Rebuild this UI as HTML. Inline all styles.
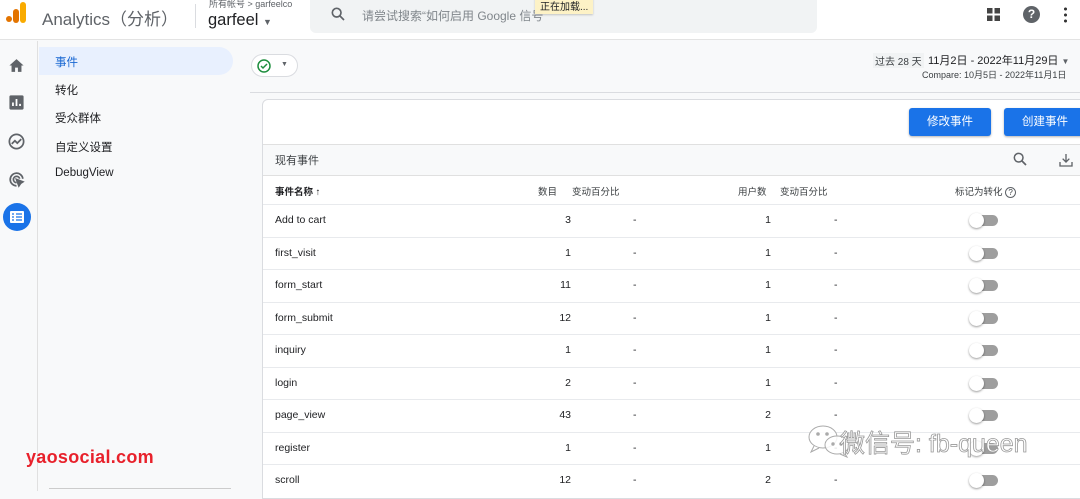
<!DOCTYPE html>
<html><head><meta charset="utf-8"><style>
*{box-sizing:border-box;margin:0;padding:0}
body{width:1080px;height:491px;overflow:hidden;background:#f8f9fa;font-family:"Liberation Sans","Noto Sans CJK SC",sans-serif;color:#202124;position:relative}
.abs{position:absolute}
.top{left:0;top:0;width:1080px;height:40px;background:#fff;border-bottom:1px solid #e3e3e3}
.rail{left:0;top:41px;width:38px;height:450px;background:#f8f9fa;border-right:1px solid #e0e0e0}
.nav{left:39px;top:41px;width:210px;height:450px;background:#f8f9fa}
.nav div{position:absolute;left:16px;font-size:11.5px;color:#202124}
.card{left:262px;top:99px;width:830px;height:400px;background:#fff;border:1px solid #dadce0;border-radius:6px 0 0 0}
.btn{top:108px;height:28px;background:#1a73e8;color:#fff;font-size:11.5px;text-align:center;line-height:28px;border-radius:3px;box-shadow:0 1px 2px rgba(0,0,0,.3)}
.row{position:absolute;left:263px;width:820px;height:32.5px;border-top:1px solid #e8eaed;font-size:10.5px}
.row span{position:absolute;top:9px}
.tg{position:absolute;top:10px;left:711px;width:24px;height:11px;background:#9e9e9e;border-radius:6px}
.tg::before{content:"";position:absolute;left:-5px;top:-2px;width:15px;height:15px;border-radius:50%;background:#fff;box-shadow:0 1px 2px rgba(0,0,0,.4)}
</style></head><body>
<div class="abs top"></div>
<div class="abs" style="left:6px;top:16px;width:6px;height:6px;border-radius:50%;background:#e37400"></div>
<div class="abs" style="left:13px;top:9px;width:6px;height:14px;border-radius:3px;background:#e37400"></div>
<div class="abs" style="left:20px;top:2px;width:6px;height:21px;border-radius:3px;background:#f9ab00"></div>
<div class="abs" style="left:42px;top:5px;font-size:17px;color:#5f6368">Analytics（分析）</div>
<div class="abs" style="left:195px;top:4px;width:1px;height:24px;background:#dadce0"></div>
<div class="abs" style="left:209px;top:-3px;font-size:9px;color:#5f6368">所有帐号 &gt; garfeelco</div>
<div class="abs" style="left:208px;top:11px;font-size:16.5px;color:#202124">garfeel <span style="font-size:9px;color:#5f6368">▼</span></div>
<div class="abs" style="left:310px;top:0;width:507px;height:33px;background:#f1f3f4;border-radius:0 0 6px 6px"></div>
<svg class="abs" style="left:330px;top:6px" width="16" height="16" viewBox="0 0 24 24"><circle cx="10" cy="10" r="6.5" fill="none" stroke="#5f6368" stroke-width="2.5"/><path d="M15 15l6 6" stroke="#5f6368" stroke-width="2.5"/></svg>
<div class="abs" style="left:362px;top:7px;font-size:12px;color:#80868b">请尝试搜索“如何启用 Google 信号</div>
<div class="abs" style="left:535px;top:-3px;padding:1px 5px;background:#fdf2c6;font-size:10px;color:#202124;box-shadow:0 1px 2px rgba(0,0,0,.2)">正在加载...</div>
<svg class="abs" style="left:986px;top:7px" width="15" height="15" viewBox="0 0 15 15" fill="#444"><rect x="1" y="1" width="5.5" height="5.5"/><rect x="8.5" y="1" width="5.5" height="5.5"/><rect x="1" y="8.5" width="5.5" height="5.5"/><rect x="8.5" y="8.5" width="5.5" height="5.5"/></svg>
<div class="abs" style="left:1023px;top:6px;width:17px;height:17px;border-radius:50%;background:#5f6368;color:#fff;font-size:12px;font-weight:bold;text-align:center;line-height:17px">?</div>
<div class="abs" style="left:1064px;top:6px;width:3px;height:17px;background:radial-gradient(circle,#333 1.4px,transparent 1.6px) 0 0/3px 6px"></div>

<div class="abs rail"></div>
<svg class="abs" style="left:8px;top:57px" width="17" height="17" viewBox="0 0 24 24" fill="#5f6368"><path d="M12 3L2 12h3v9h5v-6h4v6h5v-9h3z"/></svg>
<svg class="abs" style="left:8px;top:94px" width="17" height="17" viewBox="0 0 24 24"><rect x="2" y="2" width="20" height="20" rx="2" fill="#5f6368"/><path d="M7 17v-5M12 17V7M17 17v-3" stroke="#fff" stroke-width="2.5"/></svg>
<svg class="abs" style="left:7px;top:132px" width="19" height="19" viewBox="0 0 24 24" fill="none" stroke="#5f6368" stroke-width="2.2"><circle cx="12" cy="12" r="9"/><path d="M6 15l4-4 3 3 5-5"/></svg>
<svg class="abs" style="left:7px;top:170px" width="19" height="19" viewBox="0 0 24 24" fill="none" stroke="#5f6368" stroke-width="2.2"><path d="M20 11a8 8 0 1 0-8 9"/><path d="M16 11a4 4 0 1 0-4 5"/><path d="M12 12l8 3-3 2-2 3z" fill="#5f6368"/></svg>
<div class="abs" style="left:3px;top:203px;width:28px;height:28px;border-radius:50%;background:#1a73e8"></div>
<svg class="abs" style="left:10px;top:210px" width="14" height="14" viewBox="0 0 14 14" fill="#fff"><rect x="0" y="1" width="14" height="12" rx="1"/><path d="M2 4h2M6 4h6M2 7h2M6 7h6M2 10h2M6 10h6" stroke="#1a73e8" stroke-width="1.3"/></svg>

<div class="abs nav">
<div style="left:0;top:6px;width:194px;height:28px;background:#e8f0fe;border-radius:0 14px 14px 0"></div>
<div style="top:13px;color:#1967d2">事件</div>
<div style="top:41px">转化</div>
<div style="top:69px">受众群体</div>
<div style="top:98px">自定义设置</div>
<div style="top:126px">DebugView</div>
</div>
<div class="abs" style="left:49px;top:488px;width:182px;height:1px;background:#ccc"></div>
<div class="abs" style="left:26px;top:447px;font-size:18px;font-weight:bold;color:#e8212b;letter-spacing:0.3px">yaosocial.com</div>

<div class="abs" style="left:251px;top:54px;width:47px;height:23px;border:1px solid #dadce0;border-radius:12px;background:#fff"></div>
<svg class="abs" style="left:257px;top:59px" width="14" height="14" viewBox="0 0 14 14" fill="none" stroke="#1e8e3e" stroke-width="1.5"><circle cx="7" cy="7" r="6"/><path d="M4 7l2 2 4-4"/></svg>
<div class="abs" style="left:281px;top:61px;font-size:7px;color:#5f6368">▼</div>
<div class="abs" style="left:250px;top:92px;width:830px;height:1px;background:#dadce0"></div>

<div class="abs" style="left:873px;top:53px;font-size:10px;color:#3c4043;background:#f1f3f4;padding:0 2px">过去 28 天</div>
<div class="abs" style="left:928px;top:52px;font-size:11px;color:#202124">11月2日 - 2022年11月29日 <span style="font-size:8px;color:#5f6368">▼</span></div>
<div class="abs" style="left:922px;top:68px;font-size:9px;color:#3c4043">Compare: 10月5日 - 2022年11月1日</div>

<div class="abs card"></div>
<div class="abs btn" style="left:909px;width:82px">修改事件</div>
<div class="abs btn" style="left:1004px;width:82px">创建事件</div>
<div class="abs" style="left:263px;top:144px;width:820px;height:32px;background:#f8f9fa;border-top:1px solid #e0e0e0;border-bottom:1px solid #e0e0e0"></div>
<div class="abs" style="left:275px;top:152px;font-size:11px;color:#3c4043">现有事件</div>
<svg class="abs" style="left:1012px;top:151px" width="16" height="16" viewBox="0 0 24 24"><circle cx="10" cy="10" r="6.5" fill="none" stroke="#5f6368" stroke-width="2.3"/><path d="M15 15l6 6" stroke="#5f6368" stroke-width="2.5"/></svg>
<svg class="abs" style="left:1058px;top:152px" width="16" height="16" viewBox="0 0 24 24" fill="none" stroke="#5f6368" stroke-width="2"><path d="M12 3v12M7 10l5 5 5-5M3 15v6h18v-6"/></svg>

<div class="abs" style="left:275px;top:184px;font-size:9.5px;font-weight:bold">事件名称 ↑</div>
<div class="abs" style="left:538px;top:184px;font-size:9.5px;color:#3c4043">数目</div>
<div class="abs" style="left:572px;top:184px;font-size:9.5px;color:#3c4043">变动百分比</div>
<div class="abs" style="left:738px;top:184px;font-size:9.5px;color:#3c4043">用户数</div>
<div class="abs" style="left:780px;top:184px;font-size:9.5px;color:#3c4043">变动百分比</div>
<div class="abs" style="left:955px;top:184px;font-size:9.5px;color:#3c4043">标记为转化 <span style="display:inline-block;width:11px;height:11px;border:1px solid #5f6368;border-radius:50%;font-size:8px;text-align:center;line-height:9px">?</span></div>

<div class="row" style="top:204px"><span style="left:12px">Add to cart</span><span style="right:512px">3</span><span style="left:370px">-</span><span style="right:312px">1</span><span style="left:571px">-</span><i class="tg"></i></div>
<div class="row" style="top:236.5px"><span style="left:12px">first_visit</span><span style="right:512px">1</span><span style="left:370px">-</span><span style="right:312px">1</span><span style="left:571px">-</span><i class="tg"></i></div>
<div class="row" style="top:269px"><span style="left:12px">form_start</span><span style="right:512px">11</span><span style="left:370px">-</span><span style="right:312px">1</span><span style="left:571px">-</span><i class="tg"></i></div>
<div class="row" style="top:301.5px"><span style="left:12px">form_submit</span><span style="right:512px">12</span><span style="left:370px">-</span><span style="right:312px">1</span><span style="left:571px">-</span><i class="tg"></i></div>
<div class="row" style="top:334px"><span style="left:12px">inquiry</span><span style="right:512px">1</span><span style="left:370px">-</span><span style="right:312px">1</span><span style="left:571px">-</span><i class="tg"></i></div>
<div class="row" style="top:366.5px"><span style="left:12px">login</span><span style="right:512px">2</span><span style="left:370px">-</span><span style="right:312px">1</span><span style="left:571px">-</span><i class="tg"></i></div>
<div class="row" style="top:399px"><span style="left:12px">page_view</span><span style="right:512px">43</span><span style="left:370px">-</span><span style="right:312px">2</span><span style="left:571px">-</span><i class="tg"></i></div>
<div class="row" style="top:431.5px"><span style="left:12px">register</span><span style="right:512px">1</span><span style="left:370px">-</span><span style="right:312px">1</span><span style="left:571px">-</span><i class="tg"></i></div>
<div class="row" style="top:464px"><span style="left:12px">scroll</span><span style="right:512px">12</span><span style="left:370px">-</span><span style="right:312px">2</span><span style="left:571px">-</span><i class="tg"></i></div>

<svg class="abs" style="left:806px;top:424px" width="50" height="36" viewBox="0 0 50 36" fill="rgba(255,255,255,.85)" stroke="#aaa" stroke-width="1"><ellipse cx="17" cy="13" rx="14" ry="11"/><path d="M8 22l-3 6 8-4"/><ellipse cx="31" cy="21" rx="12" ry="9"/><path d="M38 28l3 5-7-3"/><circle cx="12" cy="10" r="1.3" fill="#aaa"/><circle cx="21" cy="10" r="1.3" fill="#aaa"/><circle cx="27" cy="20" r="1.2" fill="#aaa"/><circle cx="35" cy="20" r="1.2" fill="#aaa"/></svg>
<div class="abs" style="left:840px;top:424px;font-size:25px;color:#fff;-webkit-text-stroke:0.8px #999">微信号: fb-queen</div>
</body></html>
